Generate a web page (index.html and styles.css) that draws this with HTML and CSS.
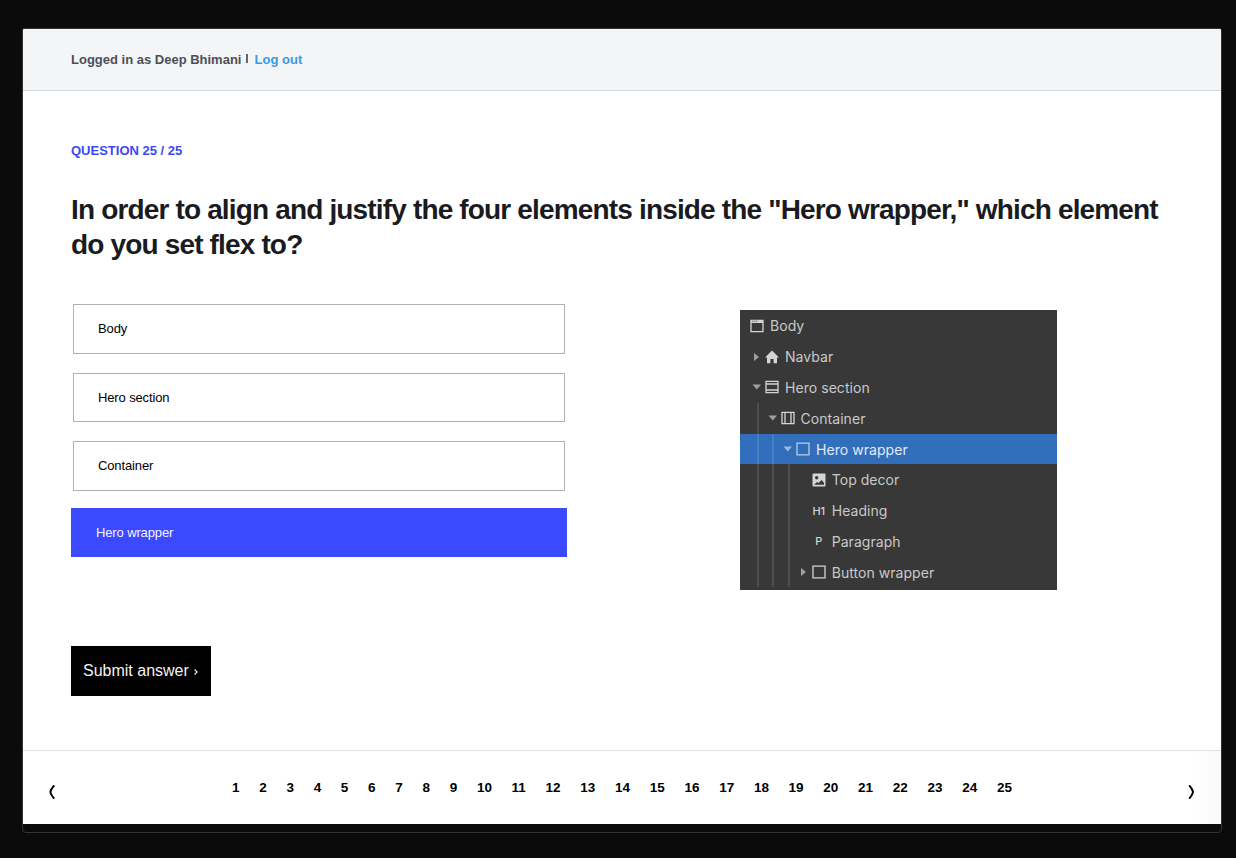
FILE: index.html
```html
<!DOCTYPE html>
<html lang="en">
<head>
<meta charset="utf-8">
<title>Question 25 / 25</title>
<link rel="stylesheet" href="styles.css">
</head>
<body>
<div class="window">
  <header class="topbar">
    <span class="user">Logged in as Deep Bhimani</span>
    <span class="divider"></span>
    <a class="logout">Log out</a>
  </header>
  <main class="question">
    <div class="counter">QUESTION 25 / 25</div>
    <h1 class="title">In order to align and justify the four elements inside the "Hero wrapper," which element<br>do you set flex to?</h1>
    <div class="columns">
      <div class="answers">
        <div class="answer">Body</div>
        <div class="answer short">Hero section</div>
        <div class="answer">Container</div>
        <div class="answer selected">Hero wrapper</div>
      </div>
      <div class="tree">
        <div class="row d0"><svg class="icon" viewBox="0 0 14 14"><path d="M1 1.3h12v11.4H1z" fill="none" stroke="currentColor" stroke-width="1.3"/><path d="M1 1h12v3H1z" fill="currentColor"/><path d="M2.3 2.2h1M4.3 2.2h1M6.3 2.2h1" stroke="#383838" stroke-width="1"/></svg>Body</div>
        <div class="row d1"><svg class="caret" viewBox="0 0 8 8"><path d="M1 0L6 4L1 8z" fill="currentColor"/></svg><svg class="icon" viewBox="0 0 14 14"><path d="M7 .5L14 7.400H12v5.800H8.600V9H5.400v4.200H2V7.400H0z" fill="currentColor"/></svg>Navbar</div>
        <div class="row d1"><svg class="caret" viewBox="0 0 8 8"><path d="M-.5 1.500H8L3.800 6.500z" fill="currentColor"/></svg><svg class="icon" viewBox="0 0 14 14"><path d="M1 1.300h12v11.400H1zM1 4h12M1 10h12" fill="none" stroke="currentColor" stroke-width="1.300"/></svg>Hero section</div>
        <div class="row d2"><svg class="caret" viewBox="0 0 8 8"><path d="M-.5 1.500H8L3.800 6.500z" fill="currentColor"/></svg><svg class="icon" viewBox="0 0 14 14"><path d="M1 1.300h12v11.400H1zM4 1v12M10 1v12" fill="none" stroke="currentColor" stroke-width="1.300"/></svg>Container</div>
        <div class="row d3 current"><svg class="caret" viewBox="0 0 8 8"><path d="M-.5 1.500H8L3.800 6.500z" fill="currentColor"/></svg><svg class="icon" viewBox="0 0 14 14"><path d="M1 1.200h12v11.600H1z" fill="none" stroke="currentColor" stroke-width="1.300"/></svg>Hero wrapper</div>
        <div class="row d4"><svg class="icon" viewBox="0 0 14 14"><path d="M1.500.5h11q1 0 1 1v11q0 1-1 1h-11q-1 0-1-1v-11q0-1 1-1z" fill="currentColor"/><circle cx="4.700" cy="4.700" r="1.700" fill="#383838"/><path d="M2.200 11.800L5 9l1.600 1L9.500 7l2.500 2.700v2.100z" fill="#383838"/></svg>Top decor</div>
        <div class="row d4"><span class="icon tag">H1</span>Heading</div>
        <div class="row d4"><span class="icon tag">P</span>Paragraph</div>
        <div class="row d4 closed"><svg class="caret" viewBox="0 0 8 8"><path d="M1 0L6 4L1 8z" fill="currentColor"/></svg><svg class="icon" viewBox="0 0 14 14"><path d="M1 1.200h12v11.600H1z" fill="none" stroke="currentColor" stroke-width="1.300"/></svg>Button wrapper</div>
        <span class="guide g1"></span><span class="guide g2"></span><span class="guide g3"></span>
      </div>
    </div>
    <div class="submit"><span>Submit answer</span><svg class="chev" viewBox="0 0 4 6"><path d="M.6.500L3 3L.6 5.500" fill="none" stroke="currentColor" stroke-width="1.100"/></svg></div>
  </main>
  <footer class="pager">
    <svg class="arrow" viewBox="0 0 8 14"><path d="M6.200 .3Q3 4 2.300 7Q3 10 6.200 13.700" fill="none" stroke="currentColor" stroke-width="1.900"/></svg>
    <nav class="pages"><span>1</span><span>2</span><span>3</span><span>4</span><span>5</span><span>6</span><span>7</span><span>8</span><span>9</span><span>10</span><span>11</span><span>12</span><span>13</span><span>14</span><span>15</span><span>16</span><span>17</span><span>18</span><span>19</span><span>20</span><span>21</span><span>22</span><span>23</span><span>24</span><span>25</span></nav>
    <svg class="arrow" viewBox="0 0 8 14"><path d="M1.200 .3Q4.400 4 5.100 7Q4.400 10 1.200 13.700" fill="none" stroke="currentColor" stroke-width="1.900"/></svg>
  </footer>
</div>
</body>
</html>
```
FILE: styles.css
```css
* { box-sizing: border-box; }
html { background: #0b0b0b; }
body {
  margin: 0;
  height: 858px;
  padding: 28px 14px 25px 22px;
  overflow: hidden;
  font-family: "Liberation Sans", Arial, sans-serif;
  background: #0b0b0b;
}
.window {
  width: 1200px;
  height: 805px;
  border: 1px solid #333;
  border-radius: 2px 2px 4px 4px;
  overflow: hidden;
}
.topbar {
  display: flex;
  align-items: center;
  height: 62px;
  padding: 0 48px;
  background: #f4f5f7;
  border-bottom: 1px solid #d3d7da;
  font-size: 13px;
  font-weight: 700;
}
.user { color: #4d4f56; }
.divider { width: 2px; height: 9px; margin: -3px 6px 0 5px; background: #65666b; }
.logout { color: #3898ec; letter-spacing: 0.03px; }
.question {
  height: 659px;
  padding: 52px 48px 0;
  background: #fff;
}
.counter { height: 16px; line-height: 16px; font-size: 13px; font-weight: 700; color: #3b49f5; }
.title {
  margin: 33px 0 0;
  height: 70px;
  font-size: 28px;
  line-height: 35px;
  letter-spacing: -0.84px;
  color: #1a1b1f;
  white-space: nowrap;
}
.columns { display: flex; height: 342px; }
.answers { width: 496px; padding-top: 42px; }
.answer {
  height: 50px;
  margin: 0 2px 19px;
  padding: 0 24px;
  border: 1px solid #b0b1b5;
  font-size: 13px;
  line-height: 47px;
  letter-spacing: -0.13px;
  color: #000;
}
.answer.short { height: 49px; }
.answer.selected {
  height: 49px;
  margin: -2px 0 0;
  padding: 0 25px;
  border: 0;
  line-height: 49px;
  background: #3b49ff;
  color: #f4f4ff;
}
.tree {
  position: relative;
  width: 317px;
  height: 280px;
  margin: 48px 0 0 173px;
  padding-top: 0.5px;
  background: #383838;
  color: #c9c9c9;
  font-family: Inter, sans-serif;
  font-size: 14px;
  overflow: hidden;
}
.row { display: flex; align-items: center; height: 30.8px; letter-spacing: 0.05px; white-space: nowrap; }
.icon { width: 14px; height: 14px; margin-right: 6px; flex: none; color: #d4d4d4; }
.caret { width: 8px; height: 8px; margin-right: 4px; flex: none; color: #a0a0a0; overflow: visible; }
.d0 { padding-left: 10px; }
.d1 { padding-left: 13px; }
.d2 { padding-left: 28.5px; }
.d3 { padding-left: 44px; }
.d4 { padding-left: 71.7px; }
.closed { padding-left: 59.7px; }
.current { background: #316fbd; color: #e2ebf6; }
.current .caret { color: #9ab8dc; }
.current .icon { color: #b5cdea; }
.tag { font-size: 11px; line-height: 14px; font-weight: 500; letter-spacing: -0.3px; text-align: center; }
.guide { position: absolute; bottom: 3px; width: 2px; background: rgba(190, 190, 190, 0.16); }
.g1 { left: 17px; top: 93px; }
.g2 { left: 32px; top: 124px; }
.g3 { left: 48px; top: 154px; }
.submit {
  display: flex;
  align-items: center;
  gap: 5px;
  width: 140px;
  height: 50px;
  margin-top: 42px;
  padding: 0 12px;
  background: #000;
  color: #f4f4f4;
  font-size: 16px;
  line-height: 50px;
  white-space: nowrap;
}
.chev { width: 4px; height: 6px; margin-top: 2px; }
.pager {
  display: flex;
  align-items: center;
  justify-content: space-between;
  height: 74px;
  padding: 0 25px;
  border-top: 1px solid #dae2e8;
  background: linear-gradient(to right, #fff 1168px, #f9f9f9);
  color: #000;
}
.pages { display: flex; gap: 19.7px; font-size: 13.5px; font-weight: 700; }
.arrow { width: 8px; height: 14px; margin-top: 9px; }
```
